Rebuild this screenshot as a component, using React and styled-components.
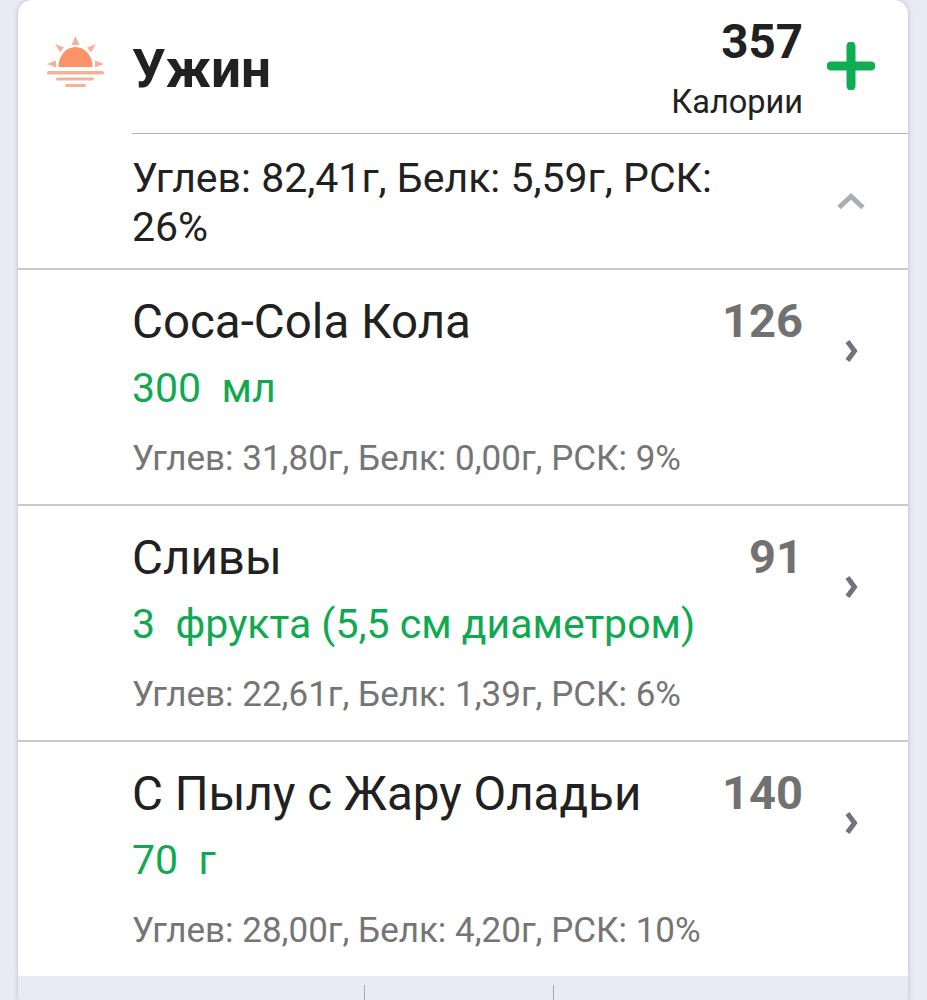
import React from 'react';
import styled, { createGlobalStyle } from 'styled-components';

const GlobalStyle = createGlobalStyle`
  html, body {
    margin: 0;
    padding: 0;
    background: #e9eaf5;
    font-family: Roboto, "Liberation Sans", sans-serif;
  }
`;

const foods = [
  { name: 'Coca-Cola Кола', amount: '300  мл', kcal: 126, info: 'Углев: 31,80г, Белк: 0,00г, РСК: 9%' },
  { name: 'Сливы', amount: '3  фрукта (5,5 см диаметром)', kcal: 91, info: 'Углев: 22,61г, Белк: 1,39г, РСК: 6%' },
  { name: 'С Пылу с Жару Оладьи', amount: '70  г', kcal: 140, info: 'Углев: 28,00г, Белк: 4,20г, РСК: 10%' }
];

const SunIcon = () => (
  <svg width="60" height="54" viewBox="0 0 60 54">
    <path d="M12.500 32a17 20 0 0 1 34 0z" fill="#fb9369" />
    <g fill="#f2b39b">
      <path d="M29.500 1l4 9h-8z" />
      <path d="M9 9l9 3.500-4 5z" />
      <path d="M50 9l-9 3.500 4 5z" />
      <path d="M1 29l9-3.500v7z" />
      <path d="M58 29l-9-3.500v7z" />
      <rect x="1" y="36" width="57" height="3.500" rx="1.500" />
      <rect x="10" y="42.500" width="38" height="3" rx="1.500" />
      <rect x="19" y="49" width="21" height="3" rx="1.500" />
    </g>
  </svg>
);

const PlusIcon = () => (
  <svg width="48" height="48" viewBox="0 0 48 48">
    <path d="M24 4v40M4 24h40" stroke="#10ad52" strokeWidth="9" strokeLinecap="round" fill="none" />
  </svg>
);

const ChevronUp = () => (
  <svg width="30" height="18" viewBox="0 0 30 18">
    <path d="M3 15.500L15 4.500l12 11" stroke="#aaadb3" strokeWidth="5" fill="none" />
  </svg>
);

const ChevronRight = () => (
  <svg width="14" height="24" viewBox="0 0 14 24">
    <path d="M2.500 2.500L9.500 12l-7 9.500" stroke="#6f7380" strokeWidth="5" fill="none" />
  </svg>
);

export default function App() {
  return (
    <Page>
      <GlobalStyle />
      <Card>
        <Header>
          <IconCell>
            <SunIcon />
          </IconCell>
          <Title>Ужин</Title>
          <Totals>
            <TotalValue>357</TotalValue>
            <TotalLabel>Калории</TotalLabel>
          </Totals>
          <AddButton>
            <PlusIcon />
          </AddButton>
        </Header>
        <Summary>
          <SummaryText>Углев: 82,41г, Белк: 5,59г, РСК: 26%</SummaryText>
          <SummaryToggle>
            <ChevronUp />
          </SummaryToggle>
        </Summary>
        {foods.map((food) => (
          <FoodRow key={food.name}>
            <FoodBody>
              <FoodTop>
                <FoodName>{food.name}</FoodName>
                <FoodKcal>{food.kcal}</FoodKcal>
              </FoodTop>
              <FoodAmount>{food.amount}</FoodAmount>
              <FoodInfo>{food.info}</FoodInfo>
            </FoodBody>
            <FoodArrow>
              <ChevronRight />
            </FoodArrow>
          </FoodRow>
        ))}
      </Card>
      <BottomBar>
        <BottomTab />
        <BottomTab />
      </BottomBar>
    </Page>
  );
}

const Page = styled.div`
  width: 927px;
  height: 1000px;
  overflow: hidden;
  display: flex;
  flex-direction: column;
  align-items: center;
`;

const Card = styled.div`
  width: 890px;
  margin-left: -1px;
  height: 976px;
  flex: none;
  background: #fff;
  border-radius: 14px 14px 0 0;
  box-shadow: 0 0 5px rgba(70, 70, 90, 0.3);
`;

const Header = styled.div`
  height: 133px;
  display: flex;
  align-items: center;
`;

const IconCell = styled.div`
  width: 114px;
  padding-left: 28px;
  box-sizing: border-box;
  display: flex;
  margin-top: -10px;
`;

const Title = styled.div`
  flex: 1;
  font-size: 53px;
  font-weight: 700;
  color: #212121;
  padding-top: 4px;
`;

const Totals = styled.div`
  display: flex;
  flex-direction: column;
  align-items: flex-end;
`;

const TotalValue = styled.div`
  font-size: 47.500px;
  line-height: 54px;
  font-weight: 700;
  color: #212121;
  padding-top: 2px;
`;

const TotalLabel = styled.div`
  font-size: 32.500px;
  line-height: 38px;
  margin-top: 14px;
  color: #212121;
`;

const AddButton = styled.div`
  width: 105px;
  display: flex;
  justify-content: center;
  padding: 0 10px 1px 0;
  box-sizing: border-box;
`;

const Summary = styled.div`
  margin-left: 114px;
  border-top: 1px solid #b3b3b3;
  height: 135px;
  padding-top: 3px;
  box-sizing: border-box;
  display: flex;
  align-items: center;
`;

const SummaryText = styled.div`
  width: 620px;
  font-size: 41px;
  line-height: 49px;
  color: #212121;
`;

const SummaryToggle = styled.div`
  margin-left: auto;
  width: 115px;
  display: flex;
  justify-content: center;
  padding-bottom: 4px;
`;

const FoodRow = styled.div`
  height: 236px;
  border-top: 2px solid #c9c9c9;
  padding-left: 114px;
  box-sizing: border-box;
  display: flex;
`;

const FoodBody = styled.div`
  flex: 1;
  display: flex;
  flex-direction: column;
  padding-top: 24px;
`;

const FoodTop = styled.div`
  display: flex;
  justify-content: space-between;
`;

const FoodName = styled.div`
  font-size: 47.500px;
  line-height: 56px;
  color: #212121;
`;

const FoodKcal = styled.div`
  font-size: 47px;
  line-height: 54px;
  font-weight: 700;
  color: #717171;
`;

const FoodAmount = styled.div`
  font-size: 41px;
  line-height: 48px;
  margin-top: 14px;
  color: #10a951;
  white-space: pre;
`;

const FoodInfo = styled.div`
  font-size: 35px;
  line-height: 40px;
  margin-top: 27px;
  color: #757575;
`;

const FoodArrow = styled.div`
  width: 105px;
  flex: none;
  display: flex;
  justify-content: center;
  padding: 69px 8px 0 0;
  box-sizing: border-box;
`;

const BottomBar = styled.div`
  width: 890px;
  margin-left: -1px;
  flex: 1;
  display: flex;
  padding: 9px 0 0 346px;
  box-sizing: border-box;
  background: #e9eaf5;
  box-shadow: 0 0 5px rgba(70, 70, 90, 0.3);
  clip-path: inset(0 -8px);
`;

const BottomTab = styled.div`
  width: 189px;
  box-sizing: border-box;
  border-left: 1px solid #a8a8b0;
`;
